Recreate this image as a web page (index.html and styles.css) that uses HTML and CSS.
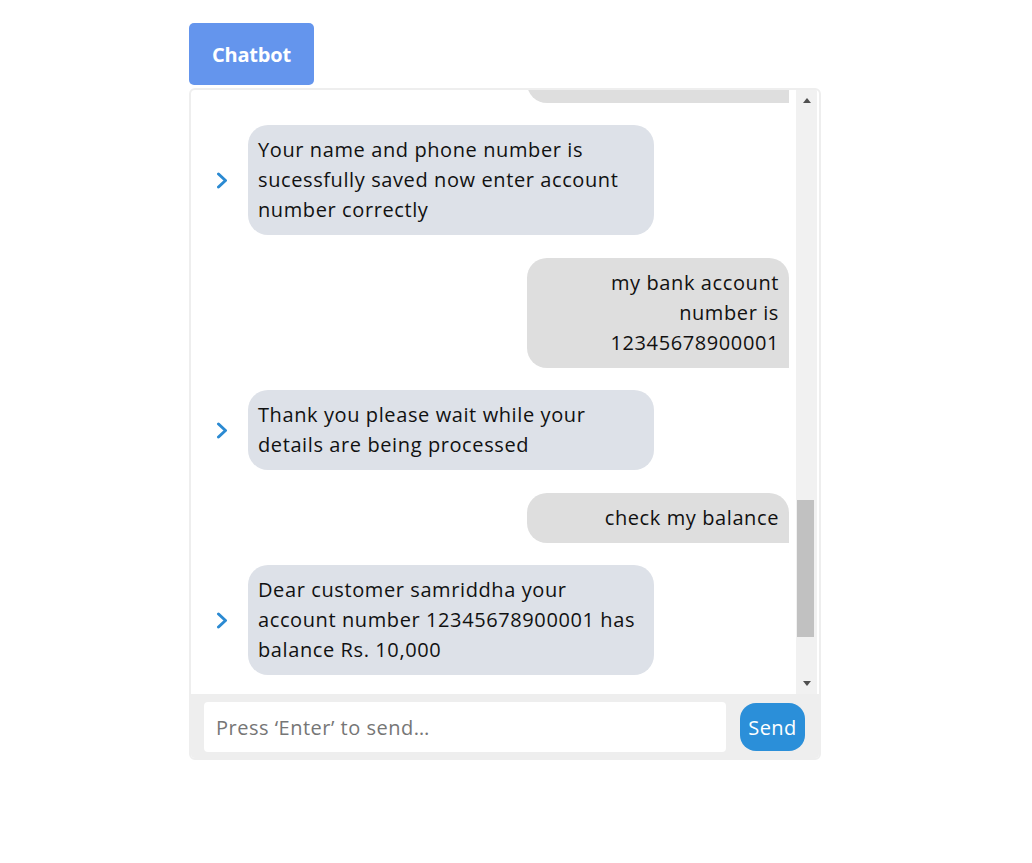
FILE: index.html
```html
<!DOCTYPE html>
<html lang="en">
<head>
<meta charset="utf-8">
<title>Chatbot</title>
<link rel="stylesheet" href="styles.css">
</head>
<body>
<div class="page">
  <div class="title">Chatbot</div>
  <div class="chat">
    <div class="chat-body">
      <div class="messages">
        <div class="msg user">
          <div class="bubble user-bubble">my name is samriddha and my phone number is 9812345678</div>
        </div>
        <div class="msg bot">
          <svg class="chev" viewBox="0 0 12 17" width="12" height="17"><polyline points="2.5,2 9.5,8.5 2.5,15" /></svg>
          <div class="bubble bot-bubble">Your name and phone number is sucessfully saved now enter account number correctly</div>
        </div>
        <div class="msg user">
          <div class="bubble user-bubble">my bank account number is 12345678900001</div>
        </div>
        <div class="msg bot">
          <svg class="chev" viewBox="0 0 12 17" width="12" height="17"><polyline points="2.5,2 9.5,8.5 2.5,15" /></svg>
          <div class="bubble bot-bubble">Thank you please wait while your details are being processed</div>
        </div>
        <div class="msg user">
          <div class="bubble user-bubble">check my balance</div>
        </div>
        <div class="msg bot">
          <svg class="chev" viewBox="0 0 12 17" width="12" height="17"><polyline points="2.5,2 9.5,8.5 2.5,15" /></svg>
          <div class="bubble bot-bubble">Dear customer samriddha your account number 12345678900001 has balance Rs. 10,000</div>
        </div>
      </div>
      <div class="scrollbar">
        <div class="sb-btn"><span class="tri-up"></span></div>
        <div class="sb-track"><div class="sb-thumb"></div></div>
        <div class="sb-btn"><span class="tri-down"></span></div>
      </div>
    </div>
    <div class="composer">
      <input class="composer-input" type="text" placeholder="Press ‘Enter’ to send…">
      <button class="send" type="button">Send</button>
    </div>
  </div>
</div>
</body>
</html>
```

FILE: styles.css
```css
* {
  box-sizing: border-box;
}

body {
  margin: 0;
  background: #ffffff;
  font-family: "Open Sans", "Noto Sans", sans-serif;
  color: #111111;
}

.page {
  padding: 23px 0 0 189px;
}

.title {
  width: 125px;
  height: 62px;
  background: #6495ed;
  color: #ffffff;
  border-radius: 5px;
  display: flex;
  align-items: center;
  justify-content: center;
  font-size: 20px;
  font-weight: 700;
  letter-spacing: -0.2px;
  margin-bottom: 3px;
}

.chat {
  width: 632px;
  border: 2px solid #eeeeee;
  border-radius: 6px;
  overflow: hidden;
}

.chat-body {
  height: 604px;
  display: flex;
}

.messages {
  flex: 1;
  overflow: hidden;
  display: flex;
  flex-direction: column;
  justify-content: flex-end;
  gap: 22.5px;
  padding-bottom: 19px;
}

.msg {
  display: flex;
  align-items: center;
  flex-shrink: 0;
}

.msg.user {
  justify-content: flex-end;
  padding-right: 7px;
}

.chev {
  margin: 0 20px 0 25px;
  flex-shrink: 0;
}

.chev polyline {
  fill: none;
  stroke: #2b8ad2;
  stroke-width: 3;
  stroke-linecap: round;
  stroke-linejoin: round;
}

.bubble {
  font-size: 20px;
  letter-spacing: 0.6px;
  line-height: 30px;
  padding: 10px;
  color: #111111;
}

.bot-bubble {
  width: 406px;
  background: #dde1e8;
  border-radius: 20px;
}

.user-bubble {
  width: 262px;
  background: #dedede;
  border-radius: 20px 20px 0 20px;
  text-align: right;
}

.scrollbar {
  width: 21px;
  margin-right: 2px;
  background: #f1f1f1;
  display: flex;
  flex-direction: column;
}

.sb-btn {
  height: 21px;
  display: flex;
  align-items: center;
  justify-content: center;
}

.tri-up {
  width: 0;
  height: 0;
  border-left: 4.5px solid transparent;
  border-right: 4.5px solid transparent;
  border-bottom: 5px solid #505050;
}

.tri-down {
  width: 0;
  height: 0;
  border-left: 4.5px solid transparent;
  border-right: 4.5px solid transparent;
  border-top: 5px solid #505050;
}

.sb-track {
  flex: 1;
}

.sb-thumb {
  width: 17px;
  margin: 389px 0 0 1px;
  height: 137px;
  background: #c1c1c1;
}

.composer {
  background: #eeeeee;
  display: flex;
  align-items: center;
  gap: 14px;
  padding: 8px 14px 6px 13px;
}

.composer-input {
  flex: 1;
  height: 50px;
  border: none;
  border-radius: 4px;
  background: #ffffff;
  padding: 0 12px;
  font-family: "Open Sans", "Noto Sans", sans-serif;
  font-size: 20px;
  letter-spacing: 0.5px;
  color: #111111;
  outline: none;
}

.composer-input::placeholder {
  color: #767676;
}

.send {
  width: 65px;
  height: 48px;
  border: none;
  border-radius: 16px;
  background: #2b8fd9;
  color: #ffffff;
  font-family: "Open Sans", "Noto Sans", sans-serif;
  font-size: 20px;
  letter-spacing: 0.4px;
  padding: 0;
}
```
